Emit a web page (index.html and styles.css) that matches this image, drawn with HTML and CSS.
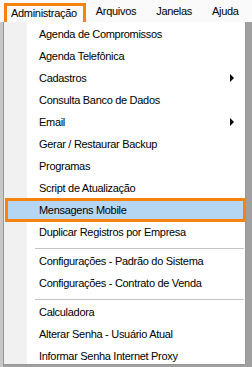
FILE: index.html
```html
<!DOCTYPE html>
<html lang="pt-BR">
<head>
  <meta charset="UTF-8" />
  <title>Menu Administração</title>
  <link rel="stylesheet" href="styles.css">
</head>
<body>

  <div class="menubar">
    <div class="top active">Administração</div>
    <div class="top">Arquivos</div>
    <div class="top">Janelas</div>
    <div class="top">Ajuda</div>
  </div>

  <div class="screen">
    <div class="edge"></div>
    <div class="dropdown">
      <div class="item">Agenda de Compromissos</div>
      <div class="item">Agenda Telefônica</div>
      <div class="item sub">Cadastros</div>
      <div class="item">Consulta Banco de Dados</div>
      <div class="item sub">Email</div>
      <div class="item">Gerar / Restaurar Backup</div>
      <div class="item">Programas</div>
      <div class="item">Script de Atualização</div>
      <div class="item selected">Mensagens Mobile</div>
      <div class="item">Duplicar Registros por Empresa</div>
      <div class="sep"></div>
      <div class="item">Configurações - Padrão do Sistema</div>
      <div class="item">Configurações - Contrato de Venda</div>
      <div class="sep"></div>
      <div class="item">Calculadora</div>
      <div class="item">Alterar Senha - Usuário Atual</div>
      <div class="item">Informar Senha Internet Proxy</div>
    </div>
    <div class="shadow"></div>
  </div>

</body>
</html>
```

FILE: styles.css
```css
* { box-sizing: border-box; }
body {
  margin: 0;
  width: 252px;
  height: 367px;
  overflow: hidden;
  background: #a0a0a0;
  font-family: 'Liberation Sans', Arial, sans-serif;
  font-size: 11px;
  letter-spacing: -0.3px;
  color: #000;
}
.menubar {
  display: flex;
  align-items: flex-end;
  height: 22px;
  background: #fafafa;
  padding-left: 4px;
}
.top {
  height: 19px;
  line-height: 17px;
  padding: 0 10px;
}
.top.active {
  border: 3px solid #f7830f;
  border-bottom: 0;
  padding: 0 6px 0 4px;
  line-height: 15px;
}
.screen { display: flex; height: 345px; }
.edge { width: 3px; background: #c8c8c8; }
.dropdown {
  width: 243px;
  height: 343px;
  border: 1px solid #979797;
  border-top: 0;
  background: linear-gradient(to right, #f1f1f1 23px, #fff 23px);
  padding: 1px 0 0 0;
}
.shadow { flex: 1; background: #a0a0a0; }
.item {
  position: relative;
  height: 22px;
  line-height: 22px;
  padding-left: 35px;
  white-space: nowrap;
}
.item.sub::after {
  content: "";
  position: absolute;
  right: 11px;
  top: 7px;
  border-left: 4px solid #000;
  border-top: 4px solid transparent;
  border-bottom: 4px solid transparent;
}
.item.selected {
  margin-left: 1px;
  width: 241px;
  height: 24px;
  line-height: 18px;
  padding-left: 31px;
  background: #b5d6f2;
  border: 3px solid #f7830f;
  margin-top: -1px;
  margin-bottom: -1px;
}
.sep {
  height: 6px;
  margin-left: 31px;
  margin-right: 1px;
  border-bottom: 1px solid #c5c5c5;
  margin-bottom: 1px;
}
```
